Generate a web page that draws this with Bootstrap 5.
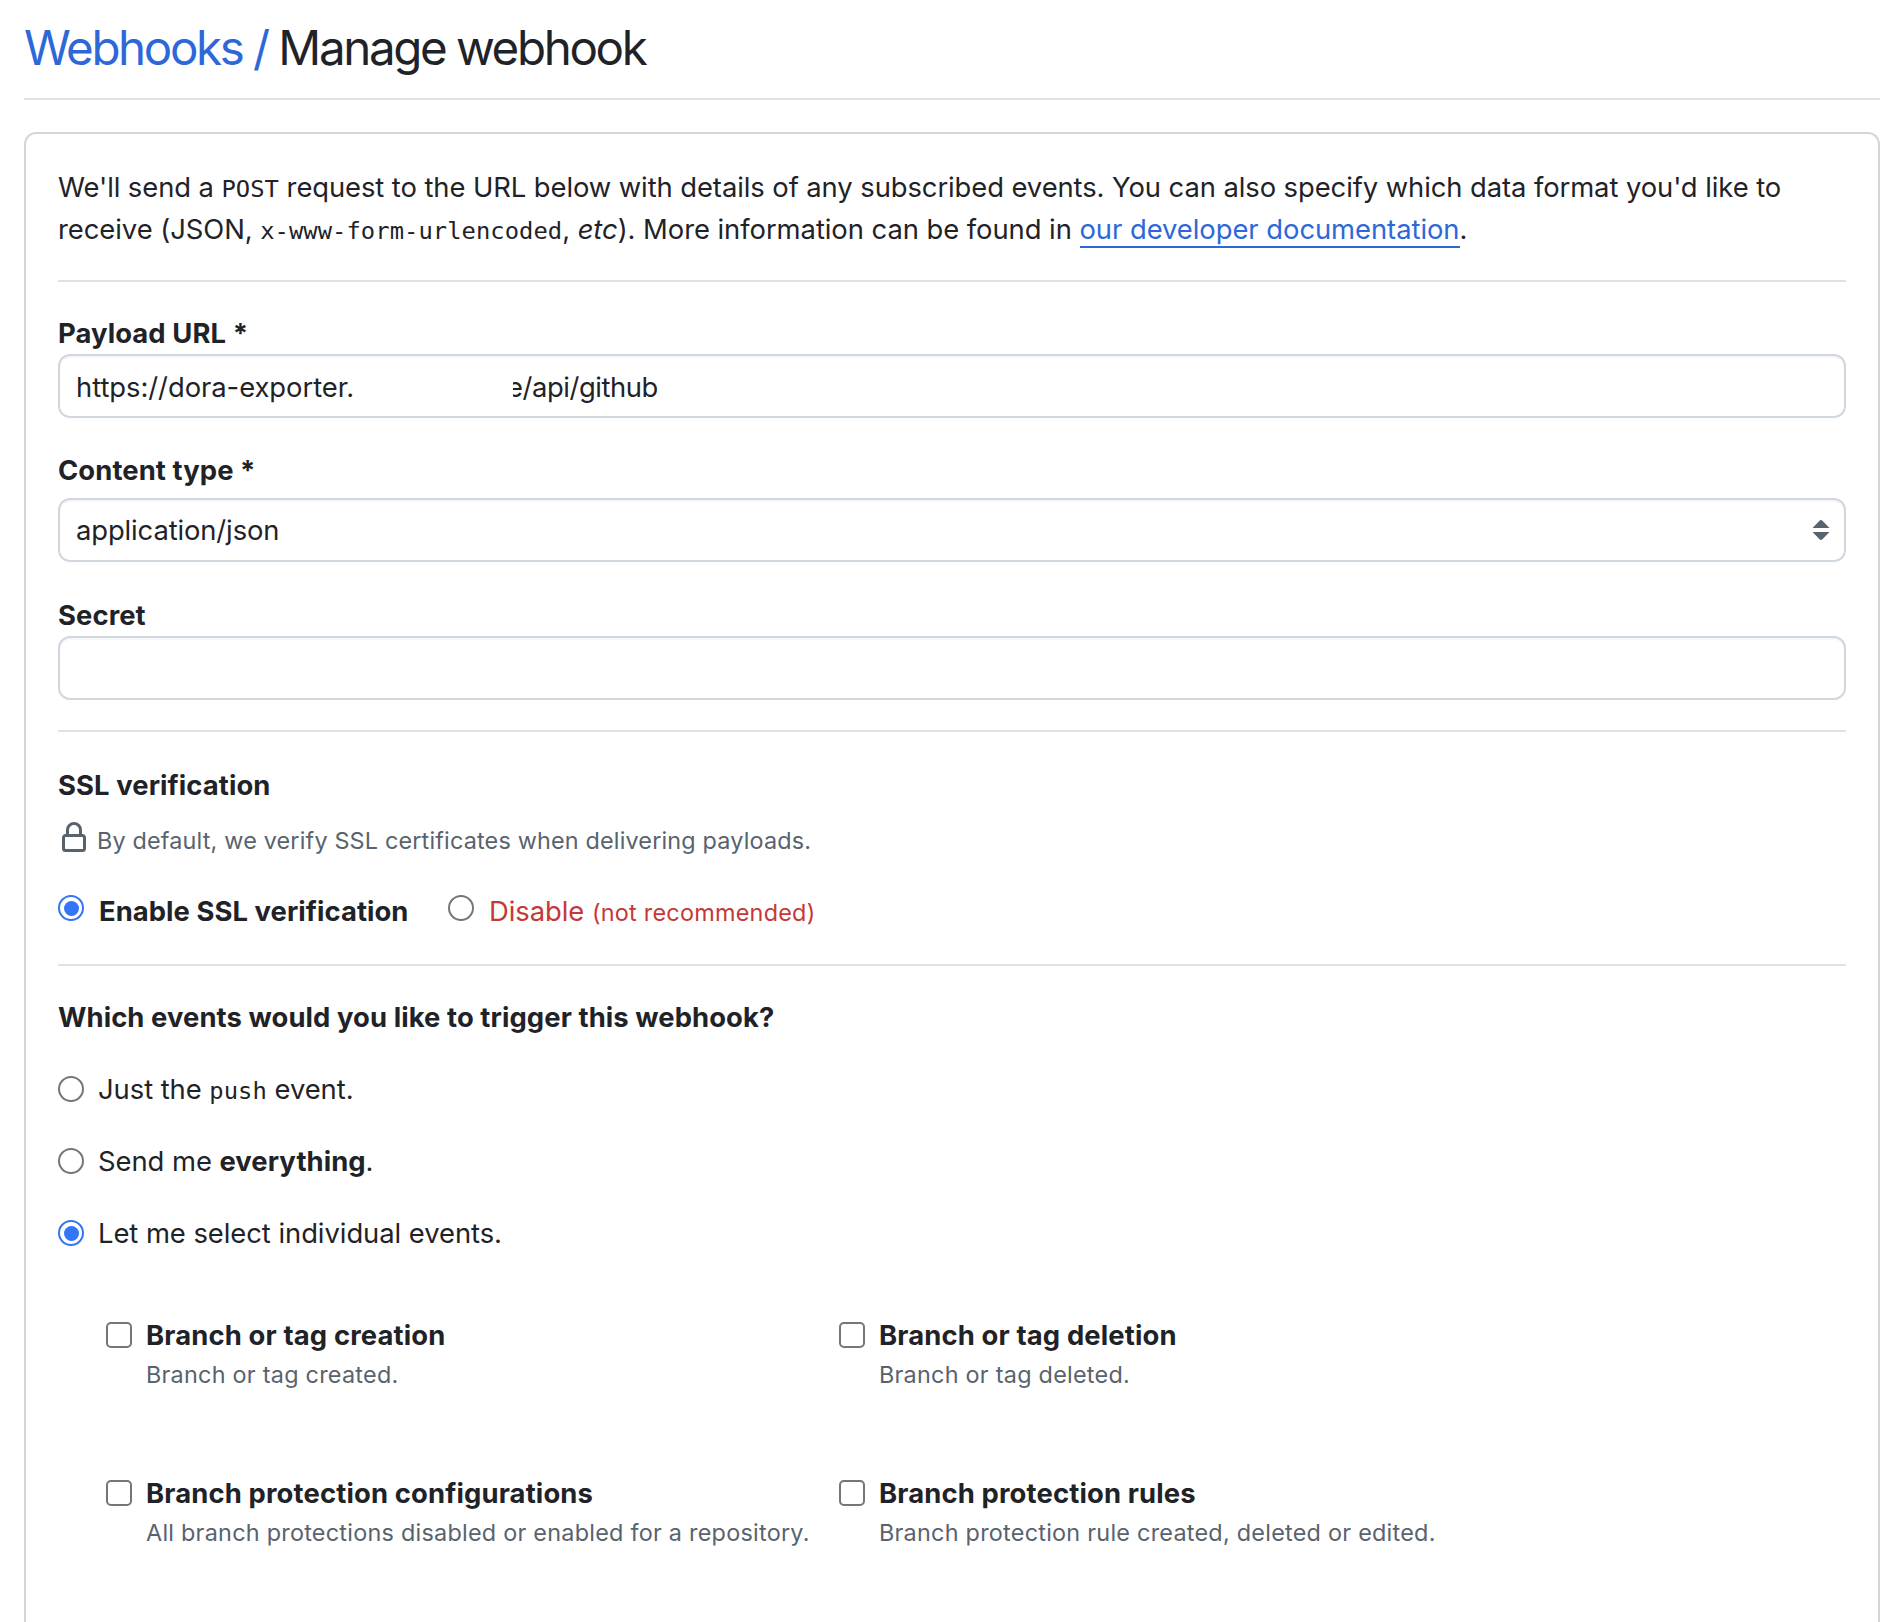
<!DOCTYPE html>
<html lang="en">
<head>
<meta charset="utf-8">
<title>Manage webhook</title>
<link href="https://cdn.jsdelivr.net/npm/bootstrap@5.3.0/dist/css/bootstrap.min.css" rel="stylesheet">
<style>
  :root { --ink: #1f2328; --muted: #59636e; --link: #2d68d8; --line: #dde2e7; --edge: #d0d7de; --accent: #3375f6; }
  body { height: 1622px; overflow: hidden; padding: 12px 22px 0 24px; background: #fff; color: var(--ink);
         font: 400 27.4px/42px Inter, "Liberation Sans", sans-serif; letter-spacing: -.05px; }
  a { color: var(--link); text-decoration: none; }
  .page-title { font-size: 47.5px; line-height: 72px; font-weight: 400; letter-spacing: -2.35px; word-spacing: -.5px; margin: 0 0 14px; white-space: nowrap; }
  hr { border: 0; height: 2px; background: var(--line); opacity: 1; margin: 0; }
  .panel { margin-top: 32px; height: 1490px; border: 2px solid var(--edge); border-bottom: 0; border-radius: 12px 12px 0 0; padding: 32px 32px 0; }
  .panel p { white-space: nowrap; }
  .intro-top { letter-spacing: -.08px; }
  code { font: 23.8px/1 "DejaVu Sans Mono", monospace; color: inherit; letter-spacing: .05px; }
  .doc-link { border-bottom: 2px solid var(--link); }
  .field-label, .section-title { font-weight: 650; font-size: 27.4px; line-height: 42px; margin: 0; display: block; letter-spacing: .09px; }
  .strong-text { font-weight: 650; letter-spacing: .06px; }
  .form-control { height: 64px; border: 2px solid var(--edge); border-radius: 12px; padding: 1px 14px 0 16px; color: var(--ink);
                  font-size: 27.4px; line-height: 60px; box-shadow: inset 0 2px 0 rgba(208,215,222,.2); white-space: nowrap; }
  .select-box { padding-top: 0; letter-spacing: -.12px; }
  .clipped { display: inline-flex; overflow: hidden; margin-left: 159px; vertical-align: top; letter-spacing: -.45px; }
  .clipped span { margin-left: -6px; }
  .note { font-size: 23.4px; line-height: 36px; color: var(--muted); letter-spacing: .25px; white-space: nowrap; }
  .form-check-input { width: 26px; height: 26px; margin: 8px 0 0; float: none; flex: none; border: 2px solid #767676; background-color: #fff; }
  .form-check-input[type=checkbox] { border-radius: 5px; }
  .form-check-input:checked[type=radio] { border-color: var(--accent); background: var(--accent) content-box; padding: 3.5px; }
  .choice { display: flex; gap: 14px; margin: 0; white-space: nowrap; }
  .ssl .choice { gap: 15px; }
  .ssl .choice:first-child { width: 390px; }
  .ssl .form-check-input { margin-top: 5px; }
  .danger-text { color: #c43838; }
  .rule-intro { margin: 30px 0; }
  .label-type { margin: 31px 0 7px; }
  .label-secret { margin-top: 32px; }
  .rule-secret { margin: 30px 0 32px; }
  .ssl-note { margin: 17px 0 31px; letter-spacing: .17px; }
  .lock-icon { margin: -1px 7px 0 0; }
  .rule-ssl { margin: 32px 0 30px; }
  .event-modes { gap: 30px; margin-top: 30px; }
  .events { padding: 60px 0 0 48px; row-gap: 79px; grid-template-columns: 733px 733px; }
  .events .field-label { margin-bottom: 1px; letter-spacing: .15px; }
</style>
<script src="https://cdn.jsdelivr.net/npm/bootstrap@5.3.0/dist/js/bootstrap.bundle.min.js"></script>
</head>
<body>
<h1 class="page-title"><a href="#">Webhooks /</a> <span>Manage webhook</span></h1>
<hr>
<main class="panel">
  <p class="mb-0"><span class="intro-top">We'll send a <code>POST</code> request to the URL below with details of any subscribed events. You can also specify which data format you'd like to</span><br>receive (JSON, <code>x-www-form-urlencoded</code>, <em>etc</em>). More information can be found in <a class="doc-link" href="#">our developer documentation</a>.</p>
  <hr class="rule-intro">
  <label class="field-label">Payload URL *</label>
  <div class="form-control"><span>https://dora-exporter.</span><span class="clipped"><span>e/api/github</span></span></div>
  <label class="field-label label-type">Content type *</label>
  <div class="form-control select-box d-flex align-items-center justify-content-between">
    <span>application/json</span>
    <svg width="18" height="20" viewBox="0 0 18 20" fill="#59636e"><path d="M.5 8 7.3.9Q9-.8 10.700.9L17.500 8ZM.5 12 7.300 19.100Q9 20.800 10.700 19.100L17.500 12Z"/></svg>
  </div>
  <label class="field-label label-secret">Secret</label>
  <div class="form-control"></div>
  <hr class="rule-secret">
  <h2 class="section-title">SSL verification</h2>
  <div class="note ssl-note d-flex">
    <svg class="lock-icon flex-shrink-0" width="32" height="32" viewBox="0 0 16 16" fill="currentColor"><path d="M4 4a4 4 0 0 1 8 0v2h.25c.966 0 1.750.784 1.750 1.750v5.500A1.750 1.750 0 0 1 12.250 15h-8.500A1.750 1.750 0 0 1 2 13.250v-5.500C2 6.784 2.784 6 3.750 6H4Zm8.250 3.500h-8.500a.25.25 0 0 0-.25.25v5.500c0 .138.112.25.25.25h8.500a.25.25 0 0 0 .25-.25v-5.500a.25.25 0 0 0-.25-.25ZM10.500 6V4a2.500 2.500 0 1 0-5 0v2Z"/></svg>
    <span>By default, we verify SSL certificates when delivering payloads.</span>
  </div>
  <div class="ssl d-flex">
    <label class="choice strong-text"><input class="form-check-input" type="radio" name="ssl" checked><span>Enable SSL verification</span></label>
    <label class="choice danger-text"><input class="form-check-input" type="radio" name="ssl"><span>Disable <span class="note danger-text">(not recommended)</span></span></label>
  </div>
  <hr class="rule-ssl">
  <h2 class="section-title">Which events would you like to trigger this webhook?</h2>
  <div class="event-modes d-grid">
    <label class="choice"><input class="form-check-input" type="radio" name="ev"><span>Just the <code>push</code> event.</span></label>
    <label class="choice"><input class="form-check-input" type="radio" name="ev"><span>Send me <b class="strong-text">everything</b>.</span></label>
    <label class="choice"><input class="form-check-input" type="radio" name="ev" checked><span>Let me select individual events.</span></label>
  </div>
  <div class="events d-grid">
    <label class="choice"><input class="form-check-input" type="checkbox"><span><span class="field-label">Branch or tag creation</span><span class="note d-block">Branch or tag created.</span></span></label>
    <label class="choice"><input class="form-check-input" type="checkbox"><span><span class="field-label">Branch or tag deletion</span><span class="note d-block">Branch or tag deleted.</span></span></label>
    <label class="choice"><input class="form-check-input" type="checkbox"><span><span class="field-label">Branch protection configurations</span><span class="note d-block">All branch protections disabled or enabled for a repository.</span></span></label>
    <label class="choice"><input class="form-check-input" type="checkbox"><span><span class="field-label">Branch protection rules</span><span class="note d-block">Branch protection rule created, deleted or edited.</span></span></label>
  </div>
</main>
</body>
</html>
